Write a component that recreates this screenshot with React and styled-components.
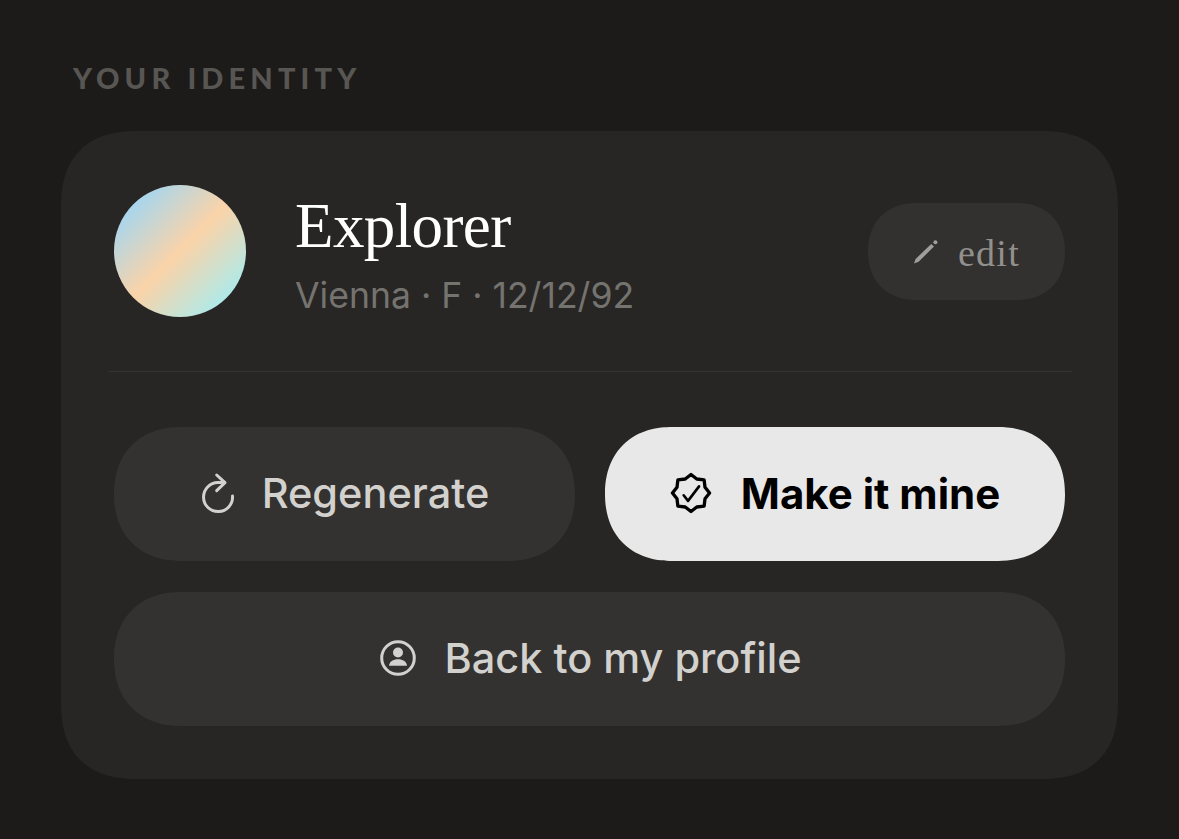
import React from "react";
import styled, { createGlobalStyle } from "styled-components";

const Global = createGlobalStyle`
  html, body { margin: 0; padding: 0; background: #1c1b19; }
  body { width: 1179px; height: 839px; overflow: hidden; font-family: Inter, "Liberation Sans", sans-serif; }
`;

const Page = styled.main`
  box-sizing: border-box;
  width: 1179px;
  height: 839px;
  padding: 62px 61px 60px;
  display: flex;
  flex-direction: column;
  background: #1c1b19;
`;

const Heading = styled.h2`
  margin: 0 0 35px 12px;
  height: 34px;
  line-height: 32px;
  font-family: Lato, Inter, sans-serif;
  font-size: 29px;
  font-weight: 900;
  letter-spacing: 5.15px;
  color: #585653;
  text-transform: uppercase;
`;

const Card = styled.section`
  box-sizing: border-box;
  width: 1057px;
  height: 648px;
  padding: 54px 53px;
  background: #272624;
  border-radius: 78px;
  corner-shape: superellipse(1.3);
  display: flex;
  flex-direction: column;
`;

const Header = styled.div`
  display: flex;
  align-items: center;
  height: 132px;
`;

const Avatar = styled.div`
  width: 132px;
  height: 132px;
  flex: none;
  border-radius: 50%;
  background: linear-gradient(135deg, #a6d6ee 14%, #fbd3a8 50%, #aeeaea 86%);
`;

const Info = styled.div`
  margin-left: 49px;
  flex: 1;
  display: flex;
  flex-direction: column;
`;

const Name = styled.div`
  font-family: "Liberation Serif", serif;
  font-size: 63px;
  line-height: 70px;
  letter-spacing: -0.6px;
  color: #ffffff;
  margin-top: 5px;
`;

const Meta = styled.div`
  font-size: 35.6px;
  line-height: 40px;
  margin-top: 15px;
  color: #75736f;
`;

const EditButton = styled.button`
  box-sizing: border-box;
  width: 197px;
  height: 97px;
  border: 0;
  border-radius: 49px;
  corner-shape: superellipse(1.15);
  background: #32312f;
  display: flex;
  align-items: center;
  justify-content: center;
  gap: 19px;
  padding: 4px 0 0;
  font-family: "Liberation Serif", serif;
  font-size: 38px;
  letter-spacing: 1.3px;
  color: #92908c;
`;

const Divider = styled.hr`
  width: 964px;
  height: 1px;
  margin: 54px 0 55px -6px;
  flex: none;
  border: 0;
  background: #353432;
`;

const Actions = styled.div`
  display: grid;
  grid-template-columns: 461px 460px;
  column-gap: 30px;
  row-gap: 31px;
`;

const Action = styled.button`
  box-sizing: border-box;
  height: 134px;
  border: 0;
  border-radius: 67px;
  corner-shape: superellipse(1.15);
  padding: 0 0 2px ${(p) => (p.$wide ? 2 : 0)}px;
  display: flex;
  align-items: center;
  justify-content: center;
  gap: ${(p) => p.$gap}px;
  font-family: Inter, "Liberation Sans", sans-serif;
  font-size: ${(p) => (p.$primary ? 42 : 41.5)}px;
  font-weight: ${(p) => (p.$primary ? 700 : 500)};
  color: ${(p) => (p.$primary ? "#000000" : "#d2d1ce")};
  background: ${(p) => (p.$primary ? "#e8e8e8" : "#333230")};
  grid-column: ${(p) => (p.$wide ? "1 / -1" : "auto")};
`;

const PencilIcon = () => (
  <svg width="26" height="28" viewBox="0 0 26 28" fill="none">
    <path d="M1 24.5 L2.6 20 L18.2 5 L21 7.6 L5.6 22.7 Z" fill="#a09e9a" />
    <circle cx="22.4" cy="3.2" r="2" fill="#a09e9a" />
  </svg>
);

const RefreshIcon = () => (
  <svg width="36" height="42" viewBox="0 0 36 42" fill="none" stroke="#d2d1ce" strokeWidth="3" strokeLinecap="round" strokeLinejoin="round">
    <path d="M24 10.6 H18 A14.5 14.5 0 1 0 32.5 24" />
    <path d="M16.7 3 L25 10.7 L16.7 18.7" />
  </svg>
);

const BadgeIcon = () => (
  <svg width="42" height="42" viewBox="0 0 24 24" fill="none" stroke="#000" strokeLinecap="round" strokeLinejoin="round">
    <path
      strokeWidth="1.9"
      d="M12 1.4 L15.3 4 L19.5 4.5 L20 8.7 L22.6 12 L20 15.3 L19.5 19.5 L15.3 20 L12 22.6 L8.7 20 L4.5 19.5 L4 15.3 L1.4 12 L4 8.7 L4.5 4.5 L8.7 4 Z"
    />
    <path strokeWidth="1.5" d="M7.8 13.3 L10.3 16.5 L16.6 8.2" />
  </svg>
);

const UserCircleIcon = () => (
  <svg width="38" height="38" viewBox="0 0 38 38" fill="none">
    <circle cx="19" cy="19" r="16.3" stroke="#d2d1ce" strokeWidth="3" />
    <circle cx="19" cy="13.5" r="5" fill="#d2d1ce" />
    <path d="M10 26.8 C10.5 22.5 14 20.2 19 20.2 C24 20.2 27.5 22.5 28 26.8 Z" fill="#d2d1ce" />
  </svg>
);

export default function App() {
  return (
    <Page>
      <Global />
      <Heading>Your identity</Heading>
      <Card>
        <Header>
          <Avatar />
          <Info>
            <Name>Explorer</Name>
            <Meta>Vienna · F · 12/12/92</Meta>
          </Info>
          <EditButton>
            <PencilIcon />
            edit
          </EditButton>
        </Header>
        <Divider />
        <Actions>
          <Action $gap={26}>
            <RefreshIcon />
            Regenerate
          </Action>
          <Action $primary $gap={29}>
            <BadgeIcon />
            Make it mine
          </Action>
          <Action $wide $gap={27}>
            <UserCircleIcon />
            Back to my profile
          </Action>
        </Actions>
      </Card>
    </Page>
  );
}
